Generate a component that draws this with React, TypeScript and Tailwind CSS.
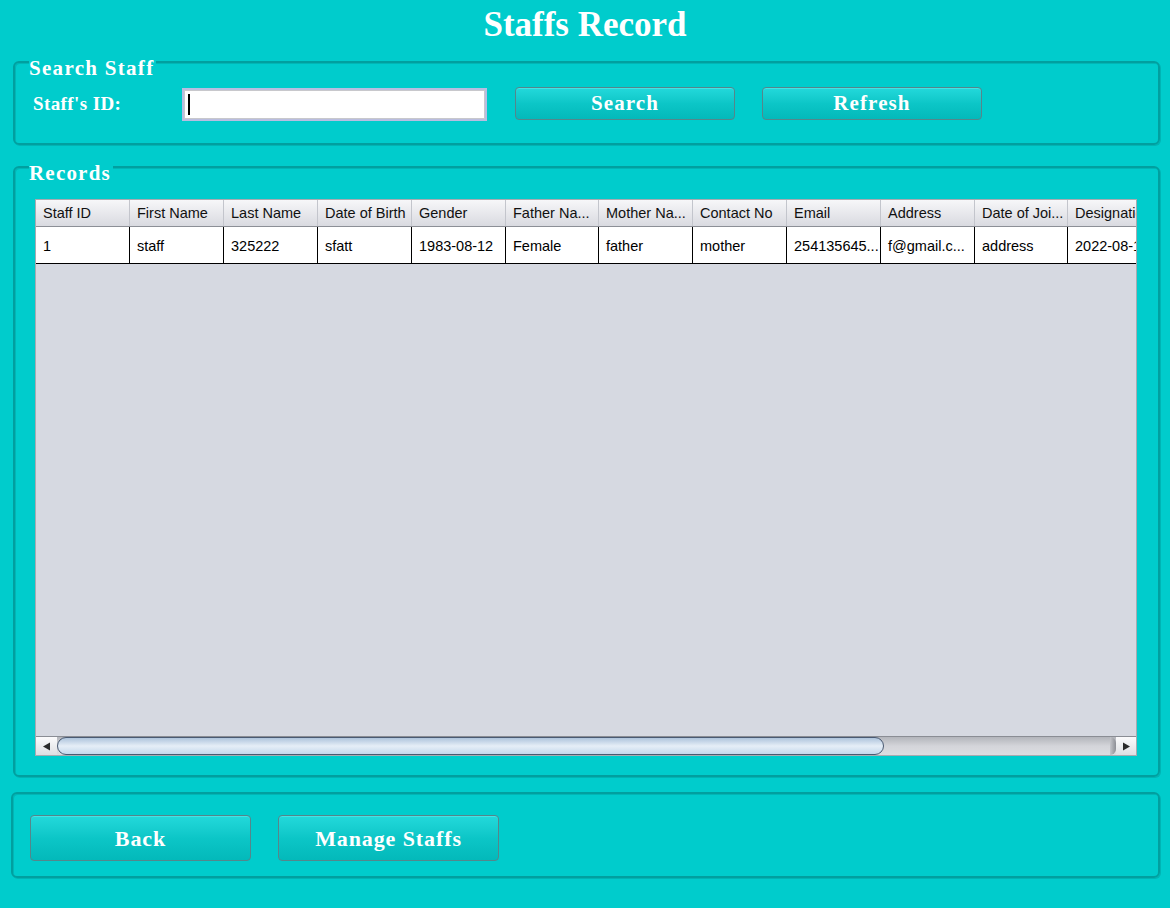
import React from 'react';

const columns = [
  'Staff ID',
  'First Name',
  'Last Name',
  'Date of Birth',
  'Gender',
  'Father Na...',
  'Mother Na...',
  'Contact No',
  'Email',
  'Address',
  'Date of Joi...',
  'Designation',
];

const row = [
  '1',
  'staff',
  '325222',
  'sfatt',
  '1983-08-12',
  'Female',
  'father',
  'mother',
  '254135645...',
  'f@gmail.c...',
  'address',
  '2022-08-18',
];

const serif = "font-['Liberation_Serif','Times_New_Roman',serif]";
const sans = "font-['Liberation_Sans',Arial,sans-serif]";

const panelClass =
  'rounded-[6px] border-2 border-[#019f9f] shadow-[inset_1px_1px_0_#00b6b6,1px_1px_0_#00b4b4]';

const Legend: React.FC<{ children: React.ReactNode; className?: string }> = ({ children, className }) => (
  <div className={`h-[22px] leading-[22px] ${className ?? ''}`}>
    <span className={`inline-block bg-[#00cccc] pr-[2px] text-[21px] font-bold text-white ${serif}`}>
      {children}
    </span>
  </div>
);

const TealButton: React.FC<{ label: string; className?: string; text?: string }> = ({ label, className, text }) => (
  <button
    className={`rounded-[4px] border border-[#55868b] bg-gradient-to-b from-[#22d9db] via-[#0cc6c7] to-[#03b9ba] font-bold text-white shadow-[inset_0_1px_0_#45e2e4] ${serif} ${className ?? ''} ${text ?? ''}`}
  >
    {label}
  </button>
);

const App: React.FC = () => {
  return (
    <div className={`h-[908px] w-[1170px] overflow-hidden bg-[#00cccc] ${serif}`}>
      <h1 className="h-[50px] text-center text-[35px] font-bold leading-[50px] text-white">Staffs Record</h1>

      {/* search panel */}
      <div className={`mt-[11px] ml-[13px] mr-[10px] h-[84px] ${panelClass}`}>
        <Legend className="-mt-[6px] ml-[14px]">
          <span className="tracking-[1.3px]">Search Staff</span>
        </Legend>
        <div className="mt-[8px] flex items-start pl-[18px]">
          <div className="mt-[3px] w-[149px] text-[19px] font-bold leading-[28px] tracking-[0.4px] text-white">
            Staff's ID:
          </div>
          <div className="mt-[1px] flex h-[33px] w-[305px] items-center border-2 border-[#b9bde0] bg-white shadow-[inset_0_0_0_1px_#c8c8cc] pl-[4px]">
            <div className="h-[21px] w-[2px] bg-black" />
          </div>
          <TealButton label="Search" className="ml-[28px] h-[33px] w-[220px]" text="text-[21px] tracking-[1.1px]" />
          <TealButton label="Refresh" className="ml-[27px] h-[33px] w-[220px]" text="text-[21px] tracking-[1.1px]" />
        </div>
      </div>

      {/* records panel */}
      <div className={`mt-[21px] ml-[13px] mr-[10px] h-[611px] ${panelClass}`}>
        <Legend className="-mt-[6px] ml-[14px]">
          <span className="tracking-[1.2px]">Records</span>
        </Legend>
        <div className={`mt-[15px] ml-[20px] flex h-[557px] w-[1102px] flex-col border border-[#a8aab0] bg-[#d6d9e1] ${sans}`}>
          <div className="flex-1 overflow-hidden">
            <div className="flex h-[27px] w-max border-b border-[#8c8f96] bg-gradient-to-b from-[#f7f7f9] to-[#d9dae0]">
              {columns.map((c, i) => (
                <div
                  key={c}
                  className={`h-full shrink-0 overflow-hidden whitespace-nowrap border-r border-[#c3c5cc] pl-[7px] text-[14.5px] leading-[26px] text-[#111] ${
                    i === 5 || i === 10 ? 'w-[93px]' : 'w-[94px]'
                  }`}
                >
                  {c}
                </div>
              ))}
            </div>
            <div className="flex h-[37px] w-max border-b border-black bg-white">
              {row.map((v, i) => (
                <div
                  key={i}
                  className={`h-full shrink-0 overflow-hidden whitespace-nowrap border-r border-black pl-[7px] text-[14.5px] leading-[38px] text-black ${
                    i === 5 || i === 10 ? 'w-[93px]' : 'w-[94px]'
                  }`}
                >
                  {v}
                </div>
              ))}
            </div>
          </div>

          {/* horizontal scrollbar */}
          <div className="flex h-[19px] border-t border-[#8a8d94] bg-gradient-to-b from-[#b3b5bb] via-[#d4d5da] to-[#dcdde1]">
            <div className="flex w-[21px] items-center justify-center bg-gradient-to-b from-[#fbfbfc] to-[#dedfe3]">
              <svg width="9" height="9" viewBox="0 0 9 9">
                <path d="M1 4.5 L8 0.5 L8 8.5 Z" fill="#2a2a2a" />
              </svg>
            </div>
            <div className="h-full w-[827px] rounded-[14px] border border-[#4a5a72] bg-gradient-to-b from-[#aec4dc] via-[#e6eef7] to-[#c4d8ec]" />
            <div className="flex-1" />
            <div className="w-[6px] rounded-r-[10px] bg-gradient-to-r from-[#c4c5ca] to-[#8d8f95]" />
            <div className="flex w-[20px] items-center justify-center bg-gradient-to-b from-[#fbfbfc] to-[#dedfe3]">
              <svg width="9" height="9" viewBox="0 0 9 9">
                <path d="M8 4.5 L1 0.5 L1 8.5 Z" fill="#2a2a2a" />
              </svg>
            </div>
          </div>
        </div>
      </div>

      {/* action panel */}
      <div className={`mt-[15px] ml-[11px] mr-[10px] flex h-[86px] items-start gap-[27px] pt-[21px] pl-[17px] ${panelClass}`}>
        <TealButton label="Back" className="h-[46px] w-[221px]" text="text-[22px] tracking-[0.9px]" />
        <TealButton label="Manage Staffs" className="h-[46px] w-[221px]" text="text-[22px] tracking-[0.9px]" />
      </div>
    </div>
  );
};

export default App;
